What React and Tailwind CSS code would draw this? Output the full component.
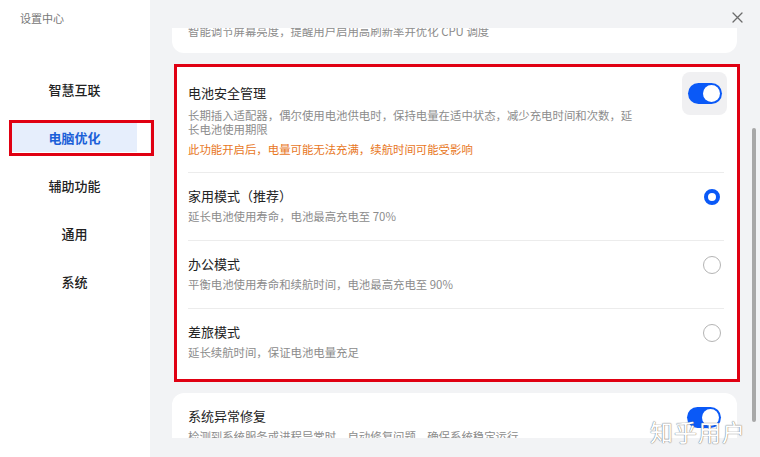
import React from 'react';

const font = { fontFamily: '"Noto Sans CJK SC", "Noto Sans", sans-serif' };

const navItems = ['智慧互联', '电脑优化', '辅助功能', '通用', '系统'];

const modes = [
  { title: '家用模式（推荐）', desc: '延长电池使用寿命，电池最高充电至 70%', checked: true },
  { title: '办公模式', desc: '平衡电池使用寿命和续航时间，电池最高充电至 90%', checked: false },
  { title: '差旅模式', desc: '延长续航时间，保证电池电量充足', checked: false },
];

const Toggle = () => (
  <div className="w-[34px] h-[21px] rounded-full bg-[#0a59f7] flex items-center justify-end pr-[2px]">
    <div className="w-[17px] h-[17px] rounded-full bg-white" />
  </div>
);

const Radio = ({ checked }) =>
  checked ? (
    <div className="w-[16px] h-[16px] rounded-full border-[4px] border-[#0a59f7] bg-white" />
  ) : (
    <div className="w-[18px] h-[18px] rounded-full border border-[#b4b4b4] bg-white" />
  );

const Sidebar = () => (
  <aside className="w-[150px] shrink-0 bg-white flex flex-col">
    <div className="pl-[20px] pt-[10px] text-[11px] leading-[16px] text-[#777]">设置中心</div>
    <nav className="flex flex-col gap-[19px] mt-[49px] pl-[12px]">
      {navItems.map((item, i) =>
        i === 1 ? (
          <div key={item} className="relative w-[125px] h-[29px] flex items-center justify-center bg-[#e6eefc] text-[#1a5fd8] text-[13px] font-bold">
            {item}
            <span className="absolute left-[-3px] top-[-3px] right-[-17px] bottom-[-4px] border-[3px] border-[#e00012]" />
          </div>
        ) : (
          <div key={item} className="w-[125px] h-[29px] flex items-center justify-center text-[13px] text-[#222] font-medium">
            {item}
          </div>
        )
      )}
    </nav>
  </aside>
);

const BatteryCard = () => (
  <div className="ml-[2px] w-[566px] bg-white border-[3px] border-[#e00012] pl-[11px] pr-[13px]">
    <div className="flex items-start pt-[16px] pb-[16px] border-b border-[#ececec]">
      <div className="flex-1">
        <div className="text-[13px] leading-[20px] text-[#222]">电池安全管理</div>
        <div className="w-[452px] mt-[5px] text-[11.4px] leading-[14px] text-[#8c8c8c]">
          长期插入适配器，偶尔使用电池供电时，保持电量在适中状态，减少充电时间和次数，延长电池使用期限
        </div>
        <div className="mt-[6px] text-[11.4px] leading-[14px] text-[#e8771e]">此功能开启后，电量可能无法充满，续航时间可能受影响</div>
      </div>
      <div className="w-[45px] h-[43px] -mt-[11px] -mr-[3px] rounded-lg bg-[#f0f0f2] flex items-center justify-center">
        <Toggle />
      </div>
    </div>
    {modes.map((m, i) => (
      <div
        key={m.title}
        className={`flex items-center pt-[13px] ${i < modes.length - 1 ? 'pb-[17px] border-b border-[#ececec]' : 'pb-[20px]'}`}
      >
        <div className="flex-1">
          <div className="text-[13px] leading-[20px] text-[#222]">{m.title}</div>
          <div className="mt-[3px] text-[11.4px] leading-[14px] text-[#8c8c8c]">{m.desc}</div>
        </div>
        <div className="w-[22px] flex justify-center -mt-[16px] mr-[1px]">
          <Radio checked={m.checked} />
        </div>
      </div>
    ))}
  </div>
);

export default function App() {
  return (
    <div className="w-[760px] h-[457px] flex overflow-hidden bg-[#f2f3f5]" style={font}>
      <Sidebar />
      <main className="relative flex-1">
        {/* close button */}
        <svg className="absolute left-[582px] top-[12px]" width="11" height="11" viewBox="0 0 11 11">
          <path d="M1 1L10 10M10 1L1 10" stroke="#6b6b6b" strokeWidth="1.3" strokeLinecap="round" />
        </svg>

        <div className="mt-[28px] h-[410px] overflow-hidden pl-[22px]">
          <div className="-mt-[50px] flex flex-col gap-[11px]">
            <div className="w-[565px] h-[75px] bg-white rounded-xl flex flex-col justify-end px-[16px] pb-[14px]">
              <div className="text-[11.4px] leading-[16px] text-[#8c8c8c]">智能调节屏幕亮度，提醒用户启用高刷新率并优化 CPU 调度</div>
            </div>
            <BatteryCard />
            <div className="w-[565px] bg-white rounded-xl px-[16px] pt-[13px] pb-[16px] flex items-start">
              <div className="flex-1">
                <div className="text-[13px] leading-[20px] text-[#222]">系统异常修复</div>
                <div className="mt-[3px] text-[11.4px] leading-[14px] text-[#8c8c8c]">检测到系统服务或进程异常时，自动修复问题，确保系统稳定运行</div>
              </div>
              <div className="mt-[1px]">
                <Toggle />
              </div>
            </div>
          </div>
        </div>

        {/* scrollbar thumb */}
        <div className="absolute left-[602px] top-[128px] w-[4px] h-[294px] rounded-full bg-[#a8a8a8]" />

        {/* watermark */}
        <div className="absolute left-[500px] top-[416px] text-[23px] leading-[30px] tracking-[1px] text-white [text-shadow:0_0_1px_#777,0_0_1px_#777]">
          知乎用户
        </div>
      </main>
    </div>
  );
}
